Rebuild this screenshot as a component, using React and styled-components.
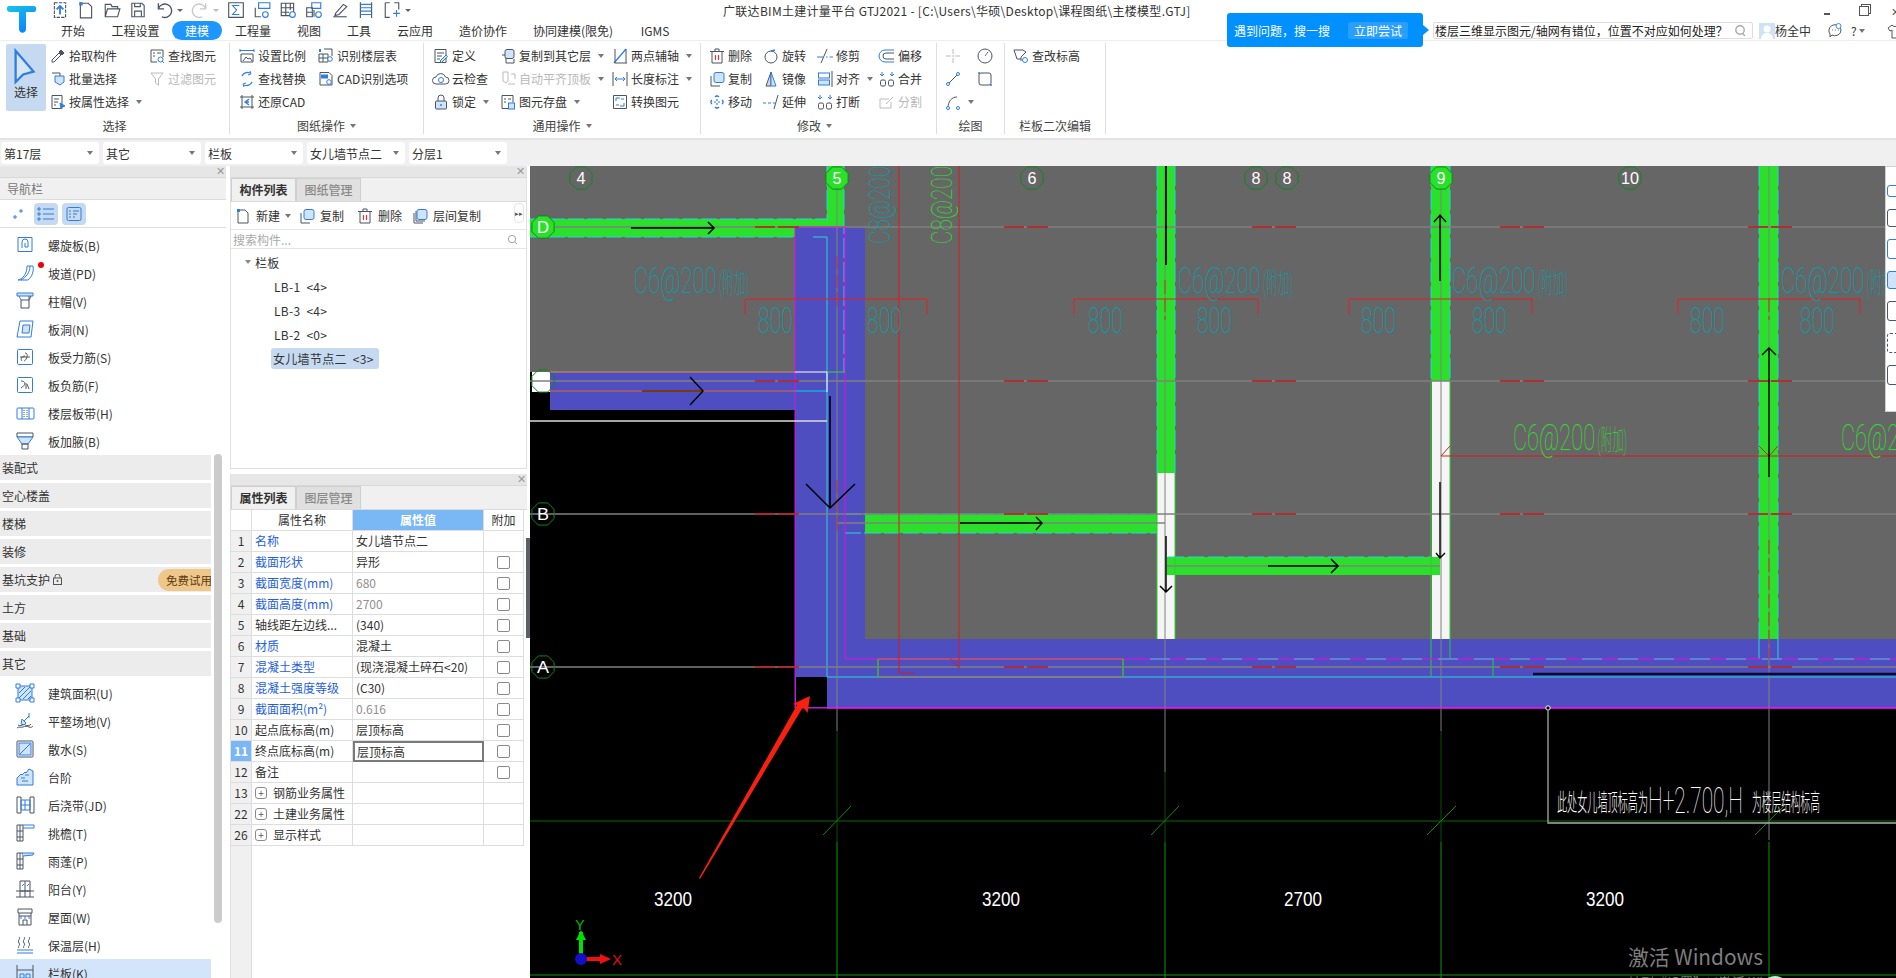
import React from 'react';
import styled, { createGlobalStyle } from 'styled-components';

const D = '#4b5563', B = '#2f7de1', L = '#cfe3fa', G = '#bbbbbb';

const Global = createGlobalStyle`
  html, body { margin: 0; padding: 0; height: 978px; overflow: hidden; background: #fff; }
  body, button { font-family: "Noto Sans CJK SC", "Liberation Sans", sans-serif; font-size: 12px; color: #333; }
  * { box-sizing: border-box; }
`;

const Page = styled.div`width: 1896px; height: 978px; display: flex; flex-direction: column; overflow: hidden; position: relative;`;

/* ---------- icons ---------- */
const P = ({ d, c = D, f = 'none', w = 1, ...r }) => <path d={d} stroke={c} fill={f} strokeWidth={w} {...r} />;
const icons = {
  upload: <><P d="M3 1.5h10v13H3z" strokeDasharray="3 1" /><P d="M8 12V5M5 7.5l3-3 3 3" c={B} w={1.6} /></>,
  newf: <><P d="M3 2h7l3 3v10H3z" /><rect x="2" y="1" width="3" height="3" fill={B} /></>,
  open: <P d="M2 14V3h5l1 2h5v2M2 14l2-7h11l-2 7z" />,
  save: <><P d="M2.5 2h9l2 2v10h-11z" /><P d="M5 2v3h5V2M5 14V9h6v5" /></>,
  undo: <P d="M3 2v5h5M3 7a6 6 0 1 1 3 7" w={1.2} />,
  redo: <P d="M13 2v5H8M13 7a6 6 0 1 0-3 7" c="#c8c8c8" w={1.2} />,
  sum: <><P d="M1.5 1.5h13v13h-13z" /><P d="M11 4H5l3.5 4L5 12h6" c={B} /></>,
  tbl1: <><P d="M2 6v8h5" /><P d="M5 1.5h10v5H5z" c={B} /><circle cx="11" cy="12" r="2.5" fill="none" stroke={B} /></>,
  tbl2: <><P d="M2 2h11v11H2zM2 6h11M2 10h7M6 2v11M10 2v6" /><circle cx="12" cy="12" r="2.5" fill="#fff" stroke={B} /></>,
  tbl3: <><P d="M6 1.5h8v5H6z" c={B} /><P d="M1.5 6h5v8h-5zM1.5 10h5M8 8v6" /><circle cx="12" cy="12" r="2.5" fill="#fff" stroke={B} /></>,
  pen: <><P d="M2 14h12" /><P d="M4 11l7-8 3 2-7 7-3.5 1z" /></>,
  hatch: <><P d="M3 1v14M13 1v14" /><P d="M3 3h10M3 6h10M3 9h10M3 12h10" c={B} /></>,
  plus: <><P d="M2 1.5h4M10 1.5h4v6M2 1.5v13h4" /><P d="M9 11h6M12 8v6" c={B} /></>,
  select: <P d="M7 3l19 22-11 3-8 8z" c={B} w={2.4} f="#d7e6f7" />,
  pick: <><P d="M11 2l3 3-2 2-3-3z" c={D} f={D} /><P d="M9 5l2 2-7 7-2 0 0-2z" /></>,
  batch: <><P d="M2 2h8v5" /><P d="M5 5h9v6l-4 3-5-3z" c={B} f={L} /></>,
  attr: <><P d="M2 1.5h10v13H2zM4 5h5M4 8h4M4 11h2" /><P d="M10 9l5 3-3 1-1 2z" c={B} f={B} /></>,
  find: <><P d="M2 2h12v7M2 2v12h6M4 5h2M8 5h4M4 8h2" /><circle cx="11.5" cy="11.5" r="2.5" fill="none" stroke={B} /><P d="M13 13l2 2" c={B} /></>,
  filter: <><P d="M2 2h12l-4.500 6v6l-3-2V8z" c={G} /></>,
  scale: <><P d="M1 2.500h14M1 1v3M15 1v3M3 5v0" c={B} /><P d="M2 6h12v8H2zM4 13l3-4 2 2 2-1 2 3" /></>,
  ftable: <><P d="M6 1h8v7" /><P d="M1 6h9v8H1zM1 10h9M5 6v8" /><P d="M2 1v3" c={B} w={2} /><circle cx="12" cy="11" r="2.300" fill="#fff" stroke={B} /></>,
  replace: <><P d="M3 5a6 6 0 0 1 8-3M13 11a6 6 0 0 1-8 3" c={B} w={1.3} /><P d="M11 0l1 3-3 1M5 16l-1-3 3-1" c={B} /></>,
  cadopt: <><P d="M2 1.500h9l3 3V14H2z" /><rect x="3" y="3.500" width="7" height="4" fill={B} /><circle cx="11" cy="11" r="2.300" fill="#fff" stroke={B} /></>,
  restore: <><P d="M3 1v14M13 1v14M1 3h14M1 13h14" /><P d="M10 5L6 8l4 3M6 8h4" c={B} w={1.300} /></>,
  define: <><P d="M2 1.500h11v13H2zM4 5h7M4 8h5M4 11h3" /><P d="M7 13l6-6 1.500 1.500-6 6z" c={B} f={L} /></>,
  copyto: <><P d="M2 7h4v8h8v-4" /><rect x="5" y="1.500" width="9" height="9" rx="2" fill={L} stroke={D} /></>,
  cloud: <><P d="M3 13a3.500 3.500 0 0 1 0-7 5 5 0 0 1 9.500 0 3.500 3.500 0 0 1 0 7z" /><circle cx="8" cy="9" r="2.500" fill="none" stroke={B} /></>,
  autotop: <P d="M3 1h5v9l-2 2-3-2zM8 13h7M11 3h4v5" c={G} />,
  lock: <><rect x="2.500" y="7" width="11" height="8" rx="1" fill={L} stroke={D} /><P d="M5 7V4a3 3 0 0 1 6 0v3" /><circle cx="8" cy="11" r="1" fill={B} /></>,
  store: <><P d="M2 1.500h11v7M2 1.500v13h6M4 5h2M8 5h3M4 8h2" /><rect x="8.500" y="9" width="6" height="6" fill={L} stroke={B} /></>,
  axis: <><P d="M2 15L14 1" c={B} w={1.300} /><P d="M3 1v14h12M14 1v14" c={D} /></>,
  dim: <><P d="M1 1v14M15 1v14" /><P d="M3 8h10M3 8l2-2M3 8l2 2M13 8l-2-2M13 8l-2 2" c={B} /></>,
  convert: <><P d="M1.500 1.500h13v13h-13z" /><P d="M4 7V4h4M12 9v3H8M4 11h3M9 5h3" c={B} /></>,
  del: <><P d="M3 4v11h10V4M1 3.500h14M6 3V1h4v2" /><P d="M6.500 7v5M9.500 7v5" c="#d33" w={1.200} /></>,
  rotate: <><circle cx="8" cy="9" r="6" fill="none" stroke={D} /><P d="M8 3l4-1" c={B} w={1.600} /></>,
  trim: <><P d="M4 15L10 1" /><P d="M0 9h6M9 9h1.500M12.500 9H16" c={B} /></>,
  offset: <><P d="M15 2H6a6 6 0 0 0 0 12h9" c={B} /><P d="M15 5H7a3 3 0 0 0 0 6h8" /></>,
  copy: <><P d="M2 5v10h9" /><rect x="5" y="1.500" width="10" height="10" rx="2" fill={L} stroke={B} /></>,
  mirror: <><P d="M8 1L3 15h5z" c={D} f="#d5d9df" /><P d="M8 1l5 14H8z" c={B} f={L} /></>,
  align: <><P d="M15 0v16" /><rect x="1.500" y="2" width="11" height="5" fill="#fff" stroke={B} /><rect x="1.500" y="9" width="11" height="5" fill={L} stroke={B} /></>,
  merge: <><P d="M3 1v3M13 1v3M5 3h0M1 3l2 2 2-2M11 3l2 2 2-2" c={B} /><rect x="1.500" y="9" width="5" height="6" rx="1.500" fill="none" stroke={D} /><rect x="9.500" y="9" width="5" height="6" rx="1.500" fill="none" stroke={D} /></>,
  move: <P d="M8 1v14M1 8h14M6 3l2-2 2 2M6 13l2 2 2-2M3 6L1 8l2 2M13 6l2 2-2 2" c={B} w={1.200} strokeDasharray="2" />,
  extend: <><P d="M0 9h3M5 9h3M10 9h2" c={B} /><P d="M11 15L15 1" /></>,
  split: <><P d="M1 5h9M1 5v9h11V8" c={G} /><P d="M7 10l7-7" c={G} /></>,
  point: <P d="M1 8h5M10 8h5M8 1v5M8 10v5M7 8h2" c={G} />,
  circle: <><circle cx="8" cy="8" r="7" fill="none" stroke={D} /><P d="M8 8l3-4" c={B} /></>,
  line: <><P d="M3 13L13 3" /><circle cx="3" cy="13" r="1.500" fill="#fff" stroke={B} /><circle cx="13" cy="3" r="1.500" fill="#fff" stroke={B} /></>,
  rect: <><rect x="2" y="2" width="12" height="12" rx="2" fill="none" stroke={D} /><circle cx="2" cy="2" r="1" fill={B} /><circle cx="14" cy="14" r="1" fill={B} /></>,
  arc: <><P d="M3 14C3 7 7 3 12 3" /><circle cx="3" cy="14" r="1.500" fill="#fff" stroke={B} /><circle cx="13" cy="14" r="1.500" fill="#fff" stroke={B} /></>,
  height: <><P d="M1 2h9l3 2-5 5v4M1 2l3 9h4" /><circle cx="12" cy="12" r="2.500" fill="#fff" stroke={B} /></>,
  layercopy: <><P d="M2 5v10h9M4 3v10h9" /><rect x="5" y="1.500" width="10" height="10" rx="2" fill={L} stroke={B} /></>,
  spiral: <><P d="M2 1.500h14v14H2z" c={B} /><P d="M6 12V6a3 3 0 0 1 6 0v5H9V7" c={B} /></>,
  ramp: <P d="M2 16c4-1 9-5 9-14h6c1 5-1 11-5 14zM5 16c5-3 9-7 9-14" c={B} />,
  cap: <><P d="M1 1h16v3H1zM3 4l2 4" c={B} f={L} /><P d="M5 8h8V4M5 8v8h8V8M15 4l-2 4" c={D} /></>,
  hole: <><P d="M4 1h13l-2 16H1z" c={B} /><P d="M7 5h7l-1 8H6z" c={B} f={L} /></>,
  rebarS: <><rect x="1.500" y="1.500" width="15" height="15" rx="1" fill="none" stroke={B} /><P d="M4 9h10M9 5c4 0 2 7-1 8M6 13c-2-2 0-5 3-5" c={D} /></>,
  rebarN: <><rect x="1.500" y="1.500" width="15" height="15" rx="1" fill="none" stroke={B} /><P d="M5 5c5 0 5 4 0 7M10 7v6M13 13l-2-5" c={D} /></>,
  band: <><rect x="1" y="4" width="17" height="11" rx="1" fill="none" stroke={B} /><P d="M6 4v11M13 4v11" c={B} /><P d="M8 6v8M11 6v8" c={D} strokeDasharray="1 1" /></>,
  haunch: <><P d="M1 1h16v4H1z" /><P d="M1 5l5 7h6l5-7z" c={B} f={L} /><P d="M6 12h6v5H6z" /></>,
  area: <><rect x="2" y="2" width="14" height="14" fill={L} stroke={B} /><P d="M3 9l6-6M3 14L14 3M7 15l8-8M12 15l3-3" c={B} /><P d="M0 0h4v4H0zM14 0h4v4h-4zM0 14h4v4H0zM14 14h4v4h-4z" c={B} f="#fff" /></>,
  land: <><P d="M8 9l5-5M13 1v5M6 7l4 4-2 2-3-1z" c={B} f={L} /><P d="M1 16c2-2 4 0 6-1s4-1 6 0 3 0 4-1M2 13c2 1 5 1 5-1M9 13c2 1 5 1 6-1" /></>,
  water: <><rect x="1" y="1" width="16" height="16" rx="1" fill="none" stroke={D} /><rect x="3" y="3" width="12" height="12" fill={L} stroke={B} /><P d="M4 14L14 4" c={B} /></>,
  step: <><P d="M1 10l4-4 1 1 3-3 1 1 3-4 4 2v14H1z" c={B} f={L} /><P d="M5 10h4M9 7h4M6 13h6" c={B} /></>,
  jd: <><P d="M1 1h4v16H1zM14 1h4v16h-4z" /><P d="M5 4h9v10H5zM5 9h9M9 4v10" c={B} /></>,
  eave: <><P d="M1 1h6v16H1zM1 7h6M1 13h6M4 1v16" /><P d="M7 1h11v3H7" c={B} /></>,
  canopy: <><P d="M1 1h6v16H1zM1 7h6M1 13h6M4 1v16" /><P d="M7 1h11l-1 2-10 1" c={B} f={L} /></>,
  balcony: <><P d="M4 1h10v10H4zM9 1v10" c={D} /><P d="M6 6l2-2M11 6l2-2" c={B} /><P d="M0 11h18M0 17h18M4 11v6M9 11v6M14 11v6" /></>,
  roof: <><P d="M2 1h14v4H2z" /><P d="M3 5v12h12V5M7 17v-5h4v5M3 8h12" /><P d="M5 8v3M9 8v3M13 8v3" c={B} /></>,
  insul: <><P d="M3 1c2 2-2 3 0 6s-2 3 0 5M8 1c2 2-2 3 0 6s-2 3 0 5M13 1c2 2-2 3 0 6s-2 3 0 5" /><P d="M1 14h16M1 17h16" c={B} /></>,
  rail: <><P d="M1 1v16M17 1v16M1 6h16M1 16h16" /><P d="M4 10h4v4H4zM10 10h4v4h-4z" c={B} /></>,
};
const Glyph = styled.svg`
  display: block; flex: none; width: ${p => p.$s}px; height: ${p => p.$s}px; overflow: visible;
`;
const Ico = ({ n, s = 16, vb = 16 }) => <Glyph $s={s} viewBox={`0 0 ${vb} ${vb}`}>{icons[n]}</Glyph>;

/* ---------- title bar ---------- */
const TitleBar = styled.header`height: 41px; display: flex; position: relative; border-bottom: 1px solid #eeeeee;`;
const Logo = styled.div`width: 50px; padding: 3px 0 0 6px; flex: none;`;
const TitleCol = styled.div`flex: 1; display: flex; flex-direction: column;`;
const TitleRow = styled.div`height: 21px; display: flex; align-items: center;`;
const QuickBar = styled.div`display: flex; align-items: center; gap: 8px; width: 673px; flex: none; padding-left: 1px;`;
const QuickCaret = styled.span`
  width: 0; height: 0; margin-left: -4px; border: 3px solid transparent; border-top-color: ${p => p.$off ? '#bbb' : '#666'}; border-bottom: 0;
`;
const AppTitle = styled.div`white-space: nowrap; font-size: 12px; color: #333; width: 1000px; letter-spacing: 0.3px;`;
const WinControls = styled.div`position: absolute; right: 0; top: 5px; display: flex; align-items: center;`;
const WinMin = styled.span`width: 6px; height: 2px; background: #555; margin-right: 29px; margin-top: 6px;`;
const WinMax = styled.span`width: 10px; height: 10px; border: 1px solid #555; margin-right: 22px; box-shadow: 2px -2px 0 -1px #fff, 2px -2px 0 0 #555;`;
const WinX = styled.span`width: 5px; color: #555; overflow: hidden; font-size: 11px; line-height: 12px;`;
const Tabs = styled.nav`display: flex; align-items: center; width: 680px; flex: none; padding-top: 1px;`;
const Tab = styled.span`
  flex: none; text-align: center; width: ${p => p.$w}px; line-height: 19px; height: 19px; border-radius: 10px; white-space: nowrap;
  margin-left: ${p => p.$ml}px;
  background: ${p => p.$on ? '#1e96ff' : 'transparent'}; color: ${p => p.$on ? '#fff' : '#333'};
`;
const Tip = styled.div`
  position: absolute; left: 1227px; top: 13px; width: 196px; height: 34px; background: #0090ff; border-radius: 3px; z-index: 5;
  display: flex; align-items: center; padding-left: 7px; color: #fff; gap: 18px; white-space: nowrap;
  &::after { content: ''; position: absolute; right: -6px; top: 12px; border: 5px solid transparent; border-left: 6px solid #0090ff; border-right: 0; }
`;
const TipButton = styled.span`background: #2a9fff; border-radius: 2px; width: 60px; height: 17px; line-height: 17px; text-align: center;`;
const Right = styled.div`position: absolute; left: 1433px; top: 22px; display: flex; align-items: center; height: 17px;`;
const Search = styled.div`
  width: 320px; height: 17px; border: 1px solid #dddddd; border-radius: 2px; position: relative; overflow: hidden; white-space: nowrap; color: #222;
  line-height: 15px; padding-left: 1px; margin-right: 6px;
`;
const SearchGlass = styled.span`position: absolute; right: 6px; top: 1px; background: #fff; padding-left: 4px;`;
const Avatar = styled.svg`width: 16px; height: 16px; flex: none;`;
const UserName = styled.span`width: 52px; flex: none;`;
const RightIcons = styled.div`display: flex; gap: 8px; align-items: center;`;
const Shirt = styled.svg`width: 16px; height: 16px; margin-left: 14px; flex: none;`;

/* ---------- ribbon ---------- */
const Ribbon = styled.section`height: 99px; display: flex; border-bottom: 2px solid #e3e3e3; flex: none;`;
const Group = styled.div`
  width: ${p => p.$w}px; flex: none; margin: 2px 0 4px; display: flex; flex-direction: column; border-right: 1px solid #dedede;
  padding: 1px 0 0 ${p => p.$pad}px;
`;
const GroupBody = styled.div`flex: 1; display: flex;`;
const GroupLabel = styled.div`height: 21px; margin-left: -${p => p.$pad}px; display: flex; align-items: center; justify-content: center; gap: 5px; color: #444; padding: 4px ${p => p.$shift || 0}px 0 0;`;
const BigSelect = styled.div`
  width: 40px; height: 67px; background: #c5daf0; border-radius: 2px; margin-right: 4px; display: flex; flex-direction: column; align-items: center; padding-top: 4px; gap: 1px;
`;
const Column = styled.div`width: ${p => p.$w}px; flex: none; display: flex; flex-direction: column;`;
const Item = styled.div`height: 23px; display: flex; align-items: center; gap: 3px; white-space: nowrap; color: ${p => p.$off ? '#b8b8b8' : '#333'};`;
const Caret = styled.span`width: 0; height: 0; margin-left: ${p => p.$ml ?? 4}px; flex: none; border: 3px solid transparent; border-top: 4px solid #777; border-bottom: 0;`;

const RI = ({ n, t, caret, off }) => (
  <Item $off={off}><Ico n={n} />{t}{caret && <Caret />}</Item>
);

/* ---------- selector row ---------- */
const SelectorRow = styled.div`height: 26px; flex: none; background: #f0f0f0; display: flex; gap: 4px; padding: 2px 0 2px 1px;`;
const Dropdown = styled.div`width: 98px; height: 22px; background: #fff; border-radius: 3px; display: flex; align-items: center; justify-content: space-between; padding: 0 6px 0 3px; white-space: nowrap;`;

/* ---------- body ---------- */
const Body = styled.main`flex: 1; display: flex; min-height: 0;`;
const NavPanel = styled.aside`width: 226px; flex: none; position: relative; overflow: hidden; background: #fff;`;
const PanelStrip = styled.div`height: 12px; background: #e6e6e6; border-bottom: 1px solid #d8d8d8; position: relative;`;
const CloseX = styled.span`position: absolute; right: 1px; top: -3px; font-size: 11px; line-height: 15px; color: #999;`;
const NavTitle = styled.div`height: 22px; line-height: 22px; background: #f0f0f0; color: #777; padding-left: 7px; border-bottom: 1px solid #ddd;`;
const NavTools = styled.div`height: 28px; display: flex; align-items: center; padding-left: 6px; gap: 4px; border-bottom: 1px solid #ddd;`;
const ToolBtn = styled.span`width: 24px; height: 22px; border-radius: 4px; display: flex; align-items: center; justify-content: center; background: ${p => p.$on ? '#c5daf0' : 'transparent'};`;
const NavList = styled.div`width: 211px; display: flex; flex-direction: column; padding-top: 3px;`;
const NavItem = styled.div`
  height: 28px; flex: none; display: flex; align-items: center; gap: 14px; padding-left: 16px; position: relative;
  background: ${p => p.$on ? '#d2e5fb' : 'transparent'};
`;
const RedDot = styled.span`position: absolute; left: 38px; top: 3px; width: 6px; height: 6px; border-radius: 50%; background: #f00000;`;
const NavGroup = styled.div`height: 25px; flex: none; margin-bottom: 3px; background: #ececec; line-height: 25px; padding-left: 2px; display: flex; align-items: center; justify-content: space-between;`;
const GroupName = styled.span`display: flex; align-items: center; gap: 3px;`;
const TrialBadge = styled.span`width: 53px; height: 22px; line-height: 22px; border-radius: 11px 0 0 11px; background: #f0c78a; color: #5b3a10; padding-left: 8px; white-space: nowrap; overflow: hidden; font-size: 11.500px;`;
const NavScroll = styled.div`position: absolute; left: 214px; top: 288px; width: 8px; height: 469px; border-radius: 4px; background: #cccccc;`;

const MidPanel = styled.aside`width: 304px; flex: none; display: flex; flex-direction: column; padding: 0 3px 0 4px; background: #fff; position: relative;`;
const Pane = styled.div`display: flex; flex-direction: column; border: 1px solid #e0e0e0; border-top: 0; height: ${p => p.$h}px; flex: none;`;
const PaneGap = styled.div`height: 5px; flex: none;`;
const TabRow = styled.div`height: 24px; flex: none; display: flex; background: #f0f0f0; border-bottom: 1px solid #dadada;`;
const PaneTab = styled.span`
  width: 65px; text-align: center; line-height: 22px; border: 1px solid #cfcfcf; border-bottom: 0; font-weight: ${p => p.$on ? 700 : 500};
  background: ${p => p.$on ? '#f0f0f0' : '#e0e0e0'}; color: ${p => p.$on ? '#333' : '#8a8a8a'};
`;
const PaneTools = styled.div`height: 28px; flex: none; display: flex; align-items: center; padding-left: 4px; border-bottom: 1px solid #e4e4e4; position: relative;`;
const PaneTool = styled.span`display: flex; align-items: center; gap: 5px; margin: 0 ${p => p.$mr}px 0 ${p => p.$ml || 0}px; white-space: nowrap;`;
const MoreBtn = styled.span`position: absolute; right: 2px; top: 1px; width: 10px; height: 20px; border: 1px solid #e4e4e4; border-radius: 4px; font-size: 7px; line-height: 18px; text-align: center; color: #555;`;
const SearchRow = styled.div`height: 19px; flex: none; display: flex; align-items: center; justify-content: space-between; padding: 0 8px 0 2px; color: #aaa; border-bottom: 1px solid #e4e4e4;`;
const Tree = styled.div`flex: 1; padding-top: 1px;`;
const TreeRow = styled.div`height: 24px; display: flex; align-items: center; padding-left: ${p => p.$in}px; gap: 4px; white-space: pre; letter-spacing: 0.3px;`;
const TreeCaret = styled.span`width: 0; height: 0; border: 3px solid transparent; border-top: 4px solid #888; border-bottom: 0;`;
const Chip = styled.span`padding: 0 5px 0 2px; line-height: 21px; background: #c5daf0; border-radius: 3px; margin-left: -3px;`;
const PropPane = styled.div`flex: 1; display: flex; flex-direction: column; border-left: 1px solid #e0e0e0; min-height: 0;`;
const PropRow = styled.div`display: grid; grid-template-columns: 21px 101px 131px 40px; height: 21px; flex: none;`;
const Cell = styled.div`
  border-right: 1px solid #dddddd; border-bottom: 1px solid #dddddd; padding: 0 3px; line-height: 20px; white-space: nowrap; overflow: hidden;
  display: flex; align-items: center; gap: 6px; color: ${p => p.$c || '#333'}; background: ${p => p.$bg || '#fff'};
  justify-content: ${p => p.$center ? 'center' : 'flex-start'}; font-weight: ${p => p.$bold ? 700 : 400};
  ${p => p.$edit ? 'box-shadow: inset 0 0 0 1px #7a7a7a; border: 1px solid #7a7a7a;' : ''}
`;
const Check = styled.span`width: 13px; height: 13px; border: 1px solid #8a8a8a; border-radius: 2px; background: #fff;`;
const Expand = styled.span`width: 12px; height: 12px; border: 1px solid #8a8a8a; border-radius: 3px; font-size: 10px; line-height: 9px; text-align: center; flex: none; color: #555;`;
const IndexFill = styled.div`flex: 1; width: 21px; background: #f0f0f0; border-right: 1px solid #dddddd;`;
const SideHandle = styled.div`position: absolute; right: 0; top: 372px; width: 4px; height: 100px; background: #5c6066;`;

/* ---------- canvas ---------- */
const Canvas = styled.div`flex: 1; position: relative; background: #000; overflow: hidden;`;
const CanvasSvg = styled.svg`display: block; width: 1366px; height: 812px;`;
const FloatBar = styled.div`
  position: absolute; right: 0; top: 0; width: 11px; height: 246px; background: #fff; border: 1px solid #d0d0d0; border-right: 0; overflow: hidden;
  display: flex; flex-direction: column; padding: 18px 0 0 1px; gap: 12px;
`;
const FloatIcon = styled.span`display: block; width: 18px; height: ${p => p.$h}px; border: 1px ${p => p.$dash ? 'dashed' : 'solid'} ${p => p.$c}; border-radius: 3px; flex: none; background: ${p => p.$bg || 'transparent'};`;

const Oct = ({ x, y, t, fill = 'none', w }) => {
  const r = 12;
  const pts = Array.from({ length: 8 }, (_, i) => {
    const a = Math.PI / 8 + (i * Math.PI) / 4;
    return `${x + r * Math.cos(a)},${y + r * Math.sin(a)}`;
  }).join(' ');
  return (
    <g>
      <polygon points={pts} fill={fill} stroke="#0a8a1a" strokeWidth="1" />
      {t && <text x={x} y={y + 6} textAnchor="middle" fill="#fff" fontSize="17" fontFamily="Liberation Sans" textLength={w || 9} lengthAdjust="spacingAndGlyphs">{t}</text>}
    </g>
  );
};
const CAD_FONT = '"Roboto","Noto Sans CJK SC",sans-serif';
const Cad = ({ x, y, w, t, c, s = 36, rotate }) => (
  <text x={x} y={y} fontSize={s} fontFamily={CAD_FONT} fontWeight="100" fill={c}
    textLength={w} lengthAdjust="spacingAndGlyphs" transform={rotate ? `rotate(-90 ${x} ${y})` : undefined}>{t}</text>
);
const Rebar = ({ x, y, w, c }) => (
  <g>
    <Cad x={x} y={y} w={w * 0.72} t="C6@200" c={c} />
    <text x={x + w * 0.74} y={y} fontSize="28" fontFamily={CAD_FONT} fontWeight="100" fill={c} textLength={w * 0.26} lengthAdjust="spacingAndGlyphs">(附加)</text>
  </g>
);
const Lbl = ({ x, t }) => <text x={x} y={906} fontSize="21" fontFamily="Liberation Sans" fill="#fff" textLength="38" lengthAdjust="spacingAndGlyphs" textAnchor="middle">{t}</text>;
const Arrow = ({ d, c = '#000', w = 1.4 }) => <path d={d} stroke={c} strokeWidth={w} fill="none" />;
const Ln = ({ d, c, w = 1, dash, o }) => <path d={d} stroke={c} strokeWidth={w} fill="none" strokeDasharray={dash} opacity={o} />;

const GREEN = '#2ae02a', BLUE = '#4e4ec0', CY = '#25d6d6', MG = '#e010e0', RED = '#d21f1f', TEAL = '#00a0b0', GR = '#808080';
const ticks = [227, 381, 514, 667];
const markXs = [755, 1004, 1252, 1500, 1748];

const CadDrawing = () => (
  <CanvasSvg viewBox="530 166 1366 812">
    <rect x="530" y="166" width="1366" height="812" fill="#000" />
    <rect x="530" y="166" width="1366" height="206" fill="#666" />
    <rect x="795" y="166" width="1101" height="473" fill="#666" />
    {/* blue slabs */}
    <rect x="795" y="227" width="70" height="481" fill={BLUE} />
    <rect x="795" y="639" width="1101" height="69" fill={BLUE} />
    <rect x="550" y="372" width="245" height="38" fill={BLUE} />
    <rect x="796" y="677" width="31" height="30" fill="#000" />
    <rect x="532" y="372" width="18" height="20" fill="#fff" />
    {/* green walls */}
    <path d="M530 219H827V166H844V227H795V237H530Z" fill={GREEN} />
    <rect x="865" y="514" width="292" height="19" fill={GREEN} />
    <rect x="1157" y="166" width="18" height="307" fill={GREEN} />
    <rect x="1157" y="473" width="18" height="166" fill="#f5f5f5" />
    <rect x="1167" y="557" width="273" height="18" fill={GREEN} />
    <rect x="1431" y="166" width="19" height="215" fill={GREEN} />
    <rect x="1432" y="381" width="18" height="258" fill="#f5f5f5" />
    <rect x="1432" y="557" width="8" height="18" fill={GREEN} />
    <rect x="1759" y="166" width="19" height="473" fill={GREEN} />
    {/* cyan wall outlines */}
    <g stroke={CY} strokeWidth="1" fill="none">
      <path d="M530 219H827M530 237H795" strokeDasharray="16 3" />
      <path d="M844 166V372M827 166V219" strokeDasharray="20 4" />
      <path d="M865 514H1157M865 533H1157M845 514H865M845 533H865" strokeDasharray="16 3" />
      <path d="M1157 166V473M1175 166V473" strokeDasharray="20 4" />
      <path d="M1431 166V381M1450 166V381" strokeDasharray="20 4" />
      <path d="M1759 166V639M1778 166V639" strokeDasharray="20 4" />
      <path d="M1168 557H1431" strokeDasharray="16 4" />
      <path d="M813 237H827M827 237V677H1533M1533 677H1896" />
      <path d="M795 391H827" strokeWidth="1.500" stroke="#19a9e0" />
      <path d="M1759 639V659M1778 639V659" />
    </g>
    <Ln d="M1431 381V677M1450 381V659M1157 473V639" c="#2ad02a" />
    <Ln d="M1175 473V639" c="#2ad02a" />
    {/* grid lines */}
    <Ln d="M530 227H1896M530 381H1896M530 514H1896M530 667H1896" c={GR} w="1.300" />
    <Ln d="M837 166V731M1165 166V772M1441 166V731M1769 166V840" c={GR} />
    <Ln d="M837 523H1165M1167 566H1440" c={GR} w="1.300" />
    <Ln d="M530 821H1896" c="#0a6a0a" />
    <Ln d="M530 975H1896" c="#0a9a0a" />
    <Ln d="M837 731V842M1165 772V842M1441 731V842" c="#0a4a0a" />
    <Ln d="M837 842V978M1165 842V978M1441 842V978M1769 842V978" c="#0a9a0a" />
    <Ln d="M823 835L851 806M1151 835L1179 806M1427 835L1456 806M1755 835L1784 806" c="#0a8a0a" />
    {/* magenta and slab outlines */}
    <Ln d="M795 227V708" c={MG} />
    <Ln d="M845 227V659H1896" c={MG} />
    <Ln d="M1150 659H1896" c={CY} dash="20 16" />
    <Ln d="M827 708H1896" c="#ff10ff" w="1.500" />
    <Ln d="M795 708H827" c={MG} />
    <Ln d="M795 227H845" c={MG} />
    <Ln d="M550 372H795" c="#e08a50" />
    <Ln d="M550 391H795" c="#b06060" w="1.300" />
    <Ln d="M642 391H703" c="#7a3a10" w="2" />
    <Ln d="M795 372H827V392" c="#fff" />
    <Ln d="M827 372H845" c={GREEN} />
    <Ln d="M530 421H827" c="#ddd" w="1.300" />
    <rect x="878" y="659" width="245" height="18" fill="none" stroke="#c2703a" />
    <Ln d="M878 659V677M1123 659V677M1493 659V677" c="#20c040" w="1.200" />
    <Ln d="M1533 674H1896" c="#0a0a2a" w="2.500" />
    {/* red rebar lines */}
    <Ln d="M899 166V673H914M959 166V668L950 658" c={RED} />
    <Ln d="M1441 456H1896M1441 456L1450 446M1759 446L1769 456L1778 446" c={RED} />
    <Ln d="M745 314V299H927V314M1074 314V299H1258V314M1349 314V299H1532V314M1678 314V299H1860V314" c="#e02020" />
    <Ln d="M837 256V310M837 480V530M1165 280V320M1769 298V320M1769 540V660" c="#c43030" dash="14 4" />
    {ticks.map(y => markXs.map(x => (
      <Ln key={`${x}-${y}`} d={`M${x} ${y}h20M${x + 23} ${y}h21`} c="#c01818" w="1.600" />
    )))}
    {/* arrows */}
    <Arrow d="M631 228H714M708 222L714 228L708 234" w="1.500" />
    <Arrow d="M690 377L703 391L690 405" />
    <Arrow d="M830 396V508M806 484L830 508L855 484" w="1.600" />
    <Arrow d="M960 523H1042M1036 517L1042 523L1036 530" />
    <Arrow d="M1166 166V265" w="1.800" />
    <Arrow d="M1166 536V592M1160 586L1166 592L1172 586" w="1.500" />
    <Arrow d="M1440 215V281M1434 222L1440 215L1446 222" />
    <Arrow d="M1440 482V558M1436 553L1440 558L1445 553" />
    <Arrow d="M1268 566H1338M1331 559L1338 566L1331 573" w="1.500" />
    <Arrow d="M1769 348V477M1762 355L1769 348L1776 355" />
    {/* CAD texts */}
    <Cad x="890" y="244" w="78" t="C8@200" c={TEAL} s="30" rotate />
    <Cad x="952" y="244" w="78" t="C8@200" c={GREEN} s="30" rotate />
    <Rebar x={634} y={293} w={115} c={TEAL} />
    <Rebar x={1178} y={293} w={115} c={TEAL} />
    <Rebar x={1452} y={293} w={116} c={TEAL} />
    <Rebar x={1781} y={293} w={116} c={TEAL} />
    <Rebar x={1513} y={450} w={114} c={GREEN} />
    <Rebar x={1841} y={450} w={114} c={GREEN} />
    {[758, 867, 1088, 1197, 1361, 1472, 1690, 1800].map(x => <Cad key={x} x={x} y="333" w="35" t="800" c={TEAL} />)}
    {/* axis bubbles */}
    <Oct x={581} y={178} t="4" />
    <Oct x={837} y={178} t="5" fill={GREEN} />
    <Oct x={1032} y={178} t="6" />
    <Oct x={1256} y={178} t="8" />
    <Oct x={1287} y={178} t="8" />
    <Oct x={1441} y={178} t="9" fill={GREEN} />
    <Oct x={1630} y={178} t="10" w={18} />
    <Oct x={543} y={227} t="D" w={12} fill={GREEN} />
    <Oct x={543} y={381} />
    <Oct x={543} y={514} t="B" w={12} />
    <Oct x={543} y={667} t="A" w={12} />
    {/* leader note */}
    <circle cx="1548" cy="708" r="2.200" fill="#000" stroke="#fff" />
    <Ln d="M1548 711V823H1896" c="#aaa" w="1.300" />
    <text x="1557" y="811" fontSize="24" fontFamily={CAD_FONT} fontWeight="300" fill="#fff" textLength="91" lengthAdjust="spacingAndGlyphs">此处女儿墙顶标高为</text>
    <text x="1648" y="813" fontSize="36" fontFamily={CAD_FONT} fontWeight="100" fill="#fff" textLength="95" lengthAdjust="spacingAndGlyphs">H+2.700,H</text>
    <text x="1752" y="811" fontSize="24" fontFamily={CAD_FONT} fontWeight="300" fill="#fff" textLength="68" lengthAdjust="spacingAndGlyphs">为楼层结构标高</text>
    <Lbl x={673} t="3200" />
    <Lbl x={1001} t="3200" />
    <Lbl x={1303} t="2700" />
    <Lbl x={1605} t="3200" />
    {/* coordinate gizmo */}
    <Ln d="M581 958V932" c="#00e000" w="4" />
    <path d="M581 930l-5 10h10z" fill="#00e000" />
    <Ln d="M581 959H600" c="#f01010" w="4" />
    <path d="M611 959l-11-5v10z" fill="#f01010" />
    <circle cx="581" cy="959" r="6" fill="#1010c8" />
    <text x="580" y="930" fontSize="14" fontFamily="Liberation Sans" fill="#00c000" textAnchor="middle">Y</text>
    <text x="617" y="965" fontSize="15" fontFamily="Liberation Sans" fill="#e01010" textAnchor="middle">X</text>
    {/* annotation arrow */}
    <polygon points="699,878 797,705 793,704 810,696 807.500,713 803,707 700,879" fill="#fa2010" />
    {/* watermark */}
    <text x="1628" y="965" fontSize="21" fontFamily='"Noto Sans CJK SC",sans-serif' fill="#7e7e7e" textLength="135" lengthAdjust="spacingAndGlyphs">激活 Windows</text>
    <text x="1628" y="987" fontSize="13" fontFamily='"Noto Sans CJK SC",sans-serif' fill="#777">转到“设置”以激活 Windows。</text>
    <circle cx="1775" cy="990" r="13" fill="#3fd070" stroke="#c0f0d0" strokeWidth="2" />
  </CanvasSvg>
);

const tabs = [['开始', 24, 61], ['工程设置', 49, 111], ['建模', 50, 172, true], ['工程量', 36, 235], ['视图', 24, 297], ['工具', 24, 347], ['云应用', 36, 397], ['造价协作', 48, 459], ['协同建模(限免)', 80, 533], ['IGMS', 32, 639]];
const upper = ['spiral:螺旋板(B)', 'ramp:坡道(PD)', 'cap:柱帽(V)', 'hole:板洞(N)', 'rebarS:板受力筋(S)', 'rebarN:板负筋(F)', 'band:楼层板带(H)', 'haunch:板加腋(B)'];
const lower = ['area:建筑面积(U)', 'land:平整场地(V)', 'water:散水(S)', 'step:台阶', 'jd:后浇带(JD)', 'eave:挑檐(T)', 'canopy:雨蓬(P)', 'balcony:阳台(Y)', 'roof:屋面(W)', 'insul:保温层(H)', 'rail:栏板(K)'];
const BL = '#1f5fe0', GY = '#8f8f8f';
const props = [
  ['1', '名称', '女儿墙节点二', BL],
  ['2', '截面形状', '异形', BL, 0, 1],
  ['3', '截面宽度(mm)', '680', BL, GY, 1],
  ['4', '截面高度(mm)', '2700', BL, GY, 1],
  ['5', '轴线距左边线...', '(340)', 0, 0, 1],
  ['6', '材质', '混凝土', BL, 0, 1],
  ['7', '混凝土类型', '(现浇混凝土碎石<20)', BL, 0, 1],
  ['8', '混凝土强度等级', '(C30)', BL, 0, 1],
  ['9', '截面面积(m²)', '0.616', BL, GY, 1],
  ['10', '起点底标高(m)', '层顶标高', 0, 0, 1],
  ['11', '终点底标高(m)', '层顶标高', 0, 0, 1],
  ['12', '备注', '', 0, 0, 1],
];

export default function App() {
  return (
    <Page>
      <Global />
      <TitleBar>
        <Logo>
          <svg width="32" height="32" viewBox="0 0 32 32">
            <defs><linearGradient id="lg" x1="0" y1="0" x2="0.6" y2="1"><stop offset="0" stopColor="#19c4e8" /><stop offset="1" stopColor="#0a84ff" /></linearGradient></defs>
            <path d="M3 3H28C31 3 31 9 28 9H20V26C20 31 13 31 13 26V9H4C0 9 0 3 3 3Z" fill="url(#lg)" />
          </svg>
        </Logo>
        <TitleCol>
          <TitleRow>
            <QuickBar>
              <Ico n="upload" s={18} /><Ico n="newf" s={18} /><Ico n="open" s={18} /><Ico n="save" s={18} /><Ico n="undo" s={18} /><QuickCaret /><Ico n="redo" s={18} /><QuickCaret $off />
              <Ico n="sum" s={18} /><Ico n="tbl1" s={18} /><Ico n="tbl2" s={18} /><Ico n="tbl3" s={18} /><Ico n="pen" s={18} /><Ico n="hatch" s={18} /><Ico n="plus" s={18} /><QuickCaret />
            </QuickBar>
            <AppTitle>广联达BIM土建计量平台 GTJ2021 - [C:\Users\华硕\Desktop\课程图纸\主楼模型.GTJ]</AppTitle>
          </TitleRow>
          <Tabs>
            {tabs.map(([t, w, x, on], i) => {
              const prev = i ? tabs[i - 1] : null;
              const ml = prev ? x - prev[2] - prev[1] : 11;
              return <Tab key={t} $w={w} $on={on} $ml={ml}>{t}</Tab>;
            })}
          </Tabs>
        </TitleCol>
        <WinControls><WinMin /><WinMax /><WinX>✕</WinX></WinControls>
        <Tip>遇到问题，搜一搜<TipButton>立即尝试</TipButton></Tip>
        <Right>
          <Search>楼层三维显示图元/轴网有错位，位置不对应如何处理？
            <SearchGlass>
              <svg width="12" height="13" viewBox="0 0 12 13"><circle cx="6" cy="6" r="4.200" fill="none" stroke="#aaa" strokeWidth="1.400" /><path d="M8.500 9.500L11 12" stroke="#aaa" strokeWidth="1.400" /></svg>
            </SearchGlass>
          </Search>
          <Avatar viewBox="0 0 16 16"><rect width="16" height="16" fill="#cfe2f7" /><circle cx="8" cy="6" r="3.500" fill="#fff" /><path d="M2 16c0-4 3-6 6-6s6 2 6 6z" fill="#fff" /></Avatar>
          <UserName>杨全中</UserName>
          <RightIcons>
            <svg width="16" height="16" viewBox="0 0 16 16"><path d="M2 7a6 5.500 0 1 1 3 5l-2 2V11a5 5 0 0 1-1-4z" fill="none" stroke="#555" /><circle cx="11.500" cy="3" r="2.500" fill="#fff" stroke="#3a8ee8" /><path d="M5 7h.8M8 7h.8M11 7h.8" stroke="#555" /></svg>
            <span>?</span><Caret $ml={-6} />
            <Shirt viewBox="0 0 16 16"><path d="M5 2L1 5l2 3 2-1v8h6V7l2 1 2-3-4-3c-1 2-5 2-6 0z" fill="none" stroke="#555" /></Shirt>
          </RightIcons>
        </Right>
      </TitleBar>

      <Ribbon>
        <Group $w={230} $pad={6}>
          <GroupBody>
            <BigSelect><Ico n="select" s={34} vb={36} />选择</BigSelect>
            <Column $w={99}><RI n="pick" t="拾取构件" /><RI n="batch" t="批量选择" /><RI n="attr" t="按属性选择" caret /></Column>
            <Column $w={70}><RI n="find" t="查找图元" /><RI n="filter" t="过滤图元" off /></Column>
          </GroupBody>
          <GroupLabel $pad={6}>选择</GroupLabel>
        </Group>
        <Group $w={194} $pad={9}>
          <GroupBody>
            <Column $w={79}><RI n="scale" t="设置比例" /><RI n="replace" t="查找替换" /><RI n="restore" t="还原CAD" /></Column>
            <Column $w={100}><RI n="ftable" t="识别楼层表" /><RI n="cadopt" t="CAD识别选项" /></Column>
          </GroupBody>
          <GroupLabel $pad={9}>图纸操作<Caret $ml={0} /></GroupLabel>
        </Group>
        <Group $w={277} $pad={9}>
          <GroupBody>
            <Column $w={67}><RI n="define" t="定义" /><RI n="cloud" t="云检查" /><RI n="lock" t="锁定" caret /></Column>
            <Column $w={112}><RI n="copyto" t="复制到其它层" caret /><RI n="autotop" t="自动平齐顶板" caret off /><RI n="store" t="图元存盘" caret /></Column>
            <Column $w={80}><RI n="axis" t="两点辅轴" caret /><RI n="dim" t="长度标注" caret /><RI n="convert" t="转换图元" /></Column>
          </GroupBody>
          <GroupLabel $pad={9}>通用操作<Caret $ml={0} /></GroupLabel>
        </Group>
        <Group $w={236} $pad={8}>
          <GroupBody>
            <Column $w={54}><RI n="del" t="删除" /><RI n="copy" t="复制" /><RI n="move" t="移动" /></Column>
            <Column $w={54}><RI n="rotate" t="旋转" /><RI n="mirror" t="镜像" /><RI n="extend" t="延伸" /></Column>
            <Column $w={62}><RI n="trim" t="修剪" /><RI n="align" t="对齐" caret /><RI n="merge" t="打断" /></Column>
            <Column $w={50}><RI n="offset" t="偏移" /><RI n="merge" t="合并" /><RI n="split" t="分割" off /></Column>
          </GroupBody>
          <GroupLabel $pad={8} $shift={8}>修改<Caret $ml={0} /></GroupLabel>
        </Group>
        <Group $w={68} $pad={8}>
          <GroupBody>
            <Column $w={32}><RI n="point" t="" /><RI n="line" t="" /><RI n="arc" t="" caret /></Column>
            <Column $w={20}><RI n="circle" t="" /><RI n="rect" t="" /></Column>
          </GroupBody>
          <GroupLabel $pad={8}>绘图</GroupLabel>
        </Group>
        <Group $w={101} $pad={8}>
          <GroupBody><Column $w={80}><RI n="height" t="查改标高" /></Column></GroupBody>
          <GroupLabel $pad={8}>栏板二次编辑</GroupLabel>
        </Group>
      </Ribbon>

      <SelectorRow>
        {['第17层', '其它', '栏板', '女儿墙节点二', '分层1'].map(t => <Dropdown key={t}>{t}<Caret $ml={0} /></Dropdown>)}
      </SelectorRow>

      <Body>
        <NavPanel>
          <PanelStrip><CloseX>✕</CloseX></PanelStrip>
          <NavTitle>导航栏</NavTitle>
          <NavTools>
            <ToolBtn><svg width="12" height="12" viewBox="0 0 12 12"><path d="M1 9h4M3 7v4M7 3h4M9 1v4" stroke={B} /></svg></ToolBtn>
            <ToolBtn $on><svg width="18" height="14" viewBox="0 0 18 14"><path d="M6 2h11M6 7h11M6 12h11" stroke={B} /><path d="M1 1h2v2H1zM1 6h2v2H1zM1 11h2v2H1z" fill="none" stroke={B} /></svg></ToolBtn>
            <ToolBtn $on><svg width="16" height="14" viewBox="0 0 16 14"><rect x="1" y="0.500" width="14" height="13" rx="1.500" fill="none" stroke={B} /><path d="M3 4h2M7 4h6M3 7h2M7 7h4M3 10h2M7 10h2" stroke={B} /></svg></ToolBtn>
          </NavTools>
          <NavList>
            {upper.map((s, i) => {
              const [n, t] = s.split(':');
              return <NavItem key={t}><Ico n={n} s={18} vb={18} />{t}{i === 1 && <RedDot />}</NavItem>;
            })}
            {['装配式', '空心楼盖', '楼梯', '装修'].map(t => <NavGroup key={t}>{t}</NavGroup>)}
            <NavGroup>
              <GroupName>基坑支护
                <svg width="9" height="11" viewBox="0 0 9 11"><rect x="0.500" y="4" width="8" height="6.500" fill="none" stroke="#555" /><path d="M2 4V2.500a2.500 2.500 0 0 1 5 0V4" fill="none" stroke="#555" /><circle cx="4.500" cy="7" r="1" fill="#555" /></svg>
              </GroupName>
              <TrialBadge>免费试用</TrialBadge>
            </NavGroup>
            {['土方', '基础', '其它'].map(t => <NavGroup key={t}>{t}</NavGroup>)}
            {lower.map(s => {
              const [n, t] = s.split(':');
              return <NavItem key={t} $on={t === '栏板(K)'}><Ico n={n} s={18} vb={18} />{t}</NavItem>;
            })}
          </NavList>
          <NavScroll />
        </NavPanel>

        <MidPanel>
          <Pane $h={303}>
            <PanelStrip><CloseX>✕</CloseX></PanelStrip>
            <TabRow><PaneTab $on>构件列表</PaneTab><PaneTab>图纸管理</PaneTab></TabRow>
            <PaneTools>
              <PaneTool $mr={5}><Ico n="newf" />新建</PaneTool>
              <Caret $ml={0} />
              <PaneTool $mr={13} $ml={8}><Ico n="copy" />复制</PaneTool>
              <PaneTool $mr={10}><Ico n="del" />删除</PaneTool>
              <PaneTool $mr={0}><Ico n="layercopy" />层间复制</PaneTool>
              <MoreBtn>▸▸</MoreBtn>
            </PaneTools>
            <SearchRow>搜索构件...
              <svg width="11" height="11" viewBox="0 0 12 12"><circle cx="5.500" cy="5.500" r="4" fill="none" stroke="#999" /><path d="M8.500 8.500L11 11" stroke="#999" /></svg>
            </SearchRow>
            <Tree>
              <TreeRow $in={14}><TreeCaret />栏板</TreeRow>
              <TreeRow $in={43}>LB-1  &lt;4&gt;</TreeRow>
              <TreeRow $in={43}>LB-3  &lt;4&gt;</TreeRow>
              <TreeRow $in={43}>LB-2  &lt;0&gt;</TreeRow>
              <TreeRow $in={43}><Chip>女儿墙节点二  &lt;3&gt;</Chip></TreeRow>
            </Tree>
          </Pane>
          <PaneGap />
          <PropPane>
            <PanelStrip><CloseX>✕</CloseX></PanelStrip>
            <TabRow><PaneTab $on>属性列表</PaneTab><PaneTab>图层管理</PaneTab></TabRow>
            <PropRow>
              <Cell />
              <Cell $center>属性名称</Cell>
              <Cell $center $bg="#7ab8f5" $c="#fff" $bold>属性值</Cell>
              <Cell $center>附加</Cell>
            </PropRow>
            {props.map(([i, name, val, nc, vc, chk]) => (
              <PropRow key={i}>
                <Cell $center $bg={i === '11' ? '#7ab8f5' : '#f0f0f0'} $c={i === '11' ? '#fff' : '#333'} $bold={i === '11'}>{i}</Cell>
                <Cell $c={nc || '#333'}>{name}</Cell>
                <Cell $c={vc || '#333'} $edit={i === '11'}>{val}</Cell>
                <Cell $center>{chk ? <Check /> : null}</Cell>
              </PropRow>
            ))}
            {[['13', '钢筋业务属性'], ['22', '土建业务属性'], ['26', '显示样式']].map(([i, t]) => (
              <PropRow key={i}>
                <Cell $center $bg="#f0f0f0">{i}</Cell>
                <Cell><Expand>+</Expand>{t}</Cell>
                <Cell />
                <Cell />
              </PropRow>
            ))}
            <IndexFill />
          </PropPane>
          <SideHandle />
        </MidPanel>

        <Canvas>
          <CadDrawing />
          <FloatBar>
            <FloatIcon $h={12} $c={B} />
            <FloatIcon $h={18} $c={D} />
            <FloatIcon $h={20} $c={B} />
            <FloatIcon $h={18} $c={B} $bg={L} />
            <FloatIcon $h={20} $c={D} />
            <FloatIcon $h={20} $c={D} $dash />
            <FloatIcon $h={20} $c={D} />
          </FloatBar>
        </Canvas>
      </Body>
    </Page>
  );
}
